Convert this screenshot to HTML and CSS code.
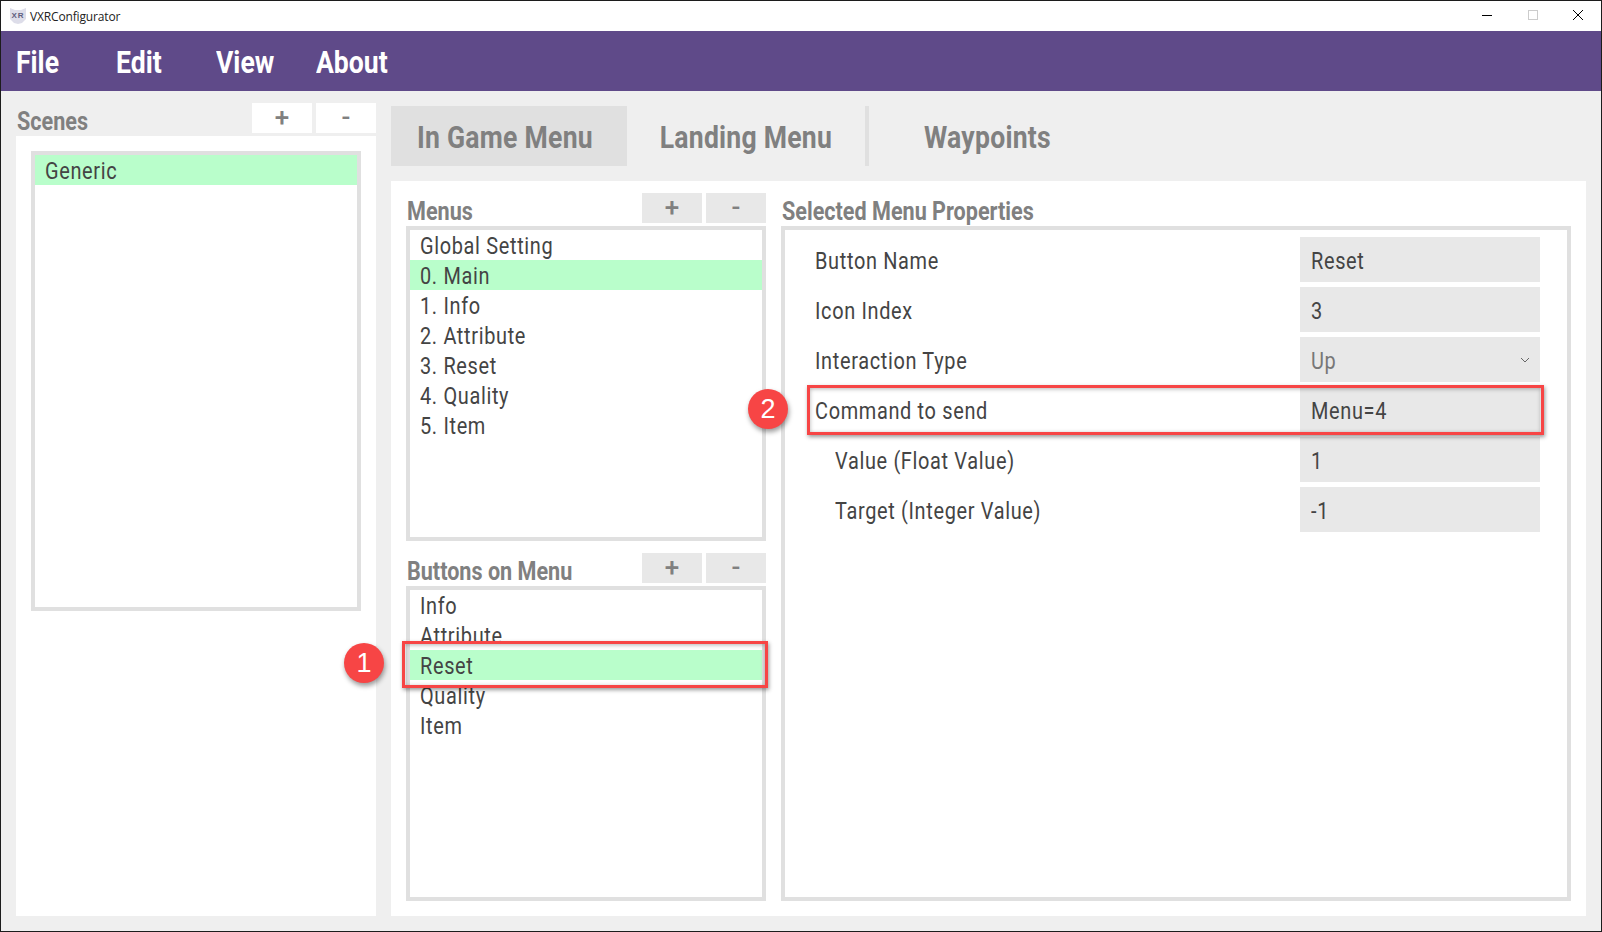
FILE: index.html
```html
<!DOCTYPE html>
<html lang="en">
<head>
    <meta charset="UTF-8">
    <meta name="viewport" content="width=device-width, initial-scale=1.0">
    <title>VXRConfigurator</title>
    <link rel="stylesheet" href="styles.css">
</head>
<body>
    <div class="window">
        <div class="titlebar">
            <svg class="app-icon" width="18" height="18" viewBox="0 0 18 18">
                <polygon points="1,1 6,3 12,3 17,1 17,12 13,16 9,17 5,16 1,12" fill="#dddde9"/>
                <text x="9" y="11" text-anchor="middle" class="app-icon-text">XR</text>
            </svg>
            <span class="app-name">VXRConfigurator</span>
            <div class="window-controls">
                <svg width="12" height="12" viewBox="0 0 12 12"><path d="M0 6.5H10" stroke="#000" stroke-width="1"/></svg>
                <svg width="12" height="12" viewBox="0 0 12 12"><rect x="1.5" y="1.5" width="9" height="9" fill="none" stroke="#ccc"/></svg>
                <svg width="12" height="12" viewBox="0 0 12 12"><path d="M1 1L11 11M11 1L1 11" stroke="#000" stroke-width="1"/></svg>
            </div>
        </div>

        <div class="menubar">
            <div class="menu-item"><span class="tx">File</span></div>
            <div class="menu-item"><span class="tx">Edit</span></div>
            <div class="menu-item"><span class="tx">View</span></div>
            <div class="menu-item"><span class="tx">About</span></div>
        </div>

        <div class="main">
            <div class="scenes">
                <div class="head">
                    <h2><span class="tx">Scenes</span></h2>
                    <div class="tool tool-light">+</div>
                    <div class="tool tool-light">-</div>
                </div>
                <div class="scenes-panel">
                    <div class="list list-scenes">
                        <div class="row selected"><span class="tx">Generic</span></div>
                    </div>
                </div>
            </div>

            <div class="content">
                <div class="tabs">
                    <div class="tab active"><span class="tx">In Game Menu</span></div>
                    <div class="tab divided"><span class="tx">Landing Menu</span></div>
                    <div class="tab"><span class="tx">Waypoints</span></div>
                </div>
                <div class="content-panel">
                    <div class="menus-col">
                        <div class="head">
                            <h2><span class="tx">Menus</span></h2>
                            <div class="tool">+</div>
                            <div class="tool">-</div>
                        </div>
                        <div class="list list-half">
                            <div class="row"><span class="tx">Global Setting</span></div>
                            <div class="row selected"><span class="tx">0. Main</span></div>
                            <div class="row"><span class="tx">1. Info</span></div>
                            <div class="row"><span class="tx">2. Attribute</span></div>
                            <div class="row"><span class="tx">3. Reset</span></div>
                            <div class="row"><span class="tx">4. Quality</span></div>
                            <div class="row"><span class="tx">5. Item</span></div>
                        </div>
                        <div class="head head-second">
                            <h2><span class="tx">Buttons on Menu</span></h2>
                            <div class="tool">+</div>
                            <div class="tool">-</div>
                        </div>
                        <div class="list list-half">
                            <div class="row"><span class="tx">Info</span></div>
                            <div class="row"><span class="tx">Attribute</span></div>
                            <div class="row selected"><span class="tx">Reset</span></div>
                            <div class="row"><span class="tx">Quality</span></div>
                            <div class="row"><span class="tx">Item</span></div>
                        </div>
                    </div>

                    <div class="props-col">
                        <div class="head">
                            <h2><span class="tx">Selected Menu Properties</span></h2>
                        </div>
                        <div class="props">
                            <div class="prop"><span class="tx">Button Name</span><div class="field"><span class="tx">Reset</span></div></div>
                            <div class="prop"><span class="tx">Icon Index</span><div class="field"><span class="tx">3</span></div></div>
                            <div class="prop">
                                <span class="tx">Interaction Type</span>
                                <div class="field field-select"><span class="tx">Up</span>
                                    <svg width="10" height="6" viewBox="0 0 10 6"><path d="M1 1L5 5L9 1" fill="none" stroke="#666" stroke-width="1"/></svg>
                                </div>
                            </div>
                            <div class="prop"><span class="tx">Command to send</span><div class="field"><span class="tx">Menu=4</span></div></div>
                            <div class="prop indented"><span class="tx">Value (Float Value)</span><div class="field"><span class="tx">1</span></div></div>
                            <div class="prop indented"><span class="tx">Target (Integer Value)</span><div class="field"><span class="tx">-1</span></div></div>
                        </div>
                    </div>
                </div>
            </div>
        </div>

        <!-- annotations drawn over the screenshot -->
        <div class="callout callout-one"></div>
        <div class="callout callout-two"></div>
        <div class="badge badge-one">1</div>
        <div class="badge badge-two">2</div>
    </div>
</body>
</html>
```

FILE: styles.css
```css
* {
    box-sizing: border-box;
}
body {
    margin: 0;
    font-family: Roboto, "Liberation Sans", sans-serif;
    color: #444;
}
.window {
    position: relative;
    width: 1602px;
    height: 932px;
    border: 1px solid #1c1c1c;
    background-color: #efefef;
    display: flex;
    flex-direction: column;
    overflow: hidden;
}
/* no condensed face is installed, so text gets squeezed sideways */
.tx {
    display: inline-block;
    white-space: nowrap;
    transform: scaleX(0.83);
    transform-origin: left center;
}
.titlebar {
    height: 30px;
    background-color: #fff;
    display: flex;
    align-items: center;
    padding-left: 8px;
}
.app-icon {
    margin-right: 3px;
}
.app-icon-text {
    font-family: "Liberation Sans", sans-serif;
    font-size: 8px;
    font-weight: 700;
    letter-spacing: 1px;
    fill: #5f5f80;
}
.app-name {
    font-family: "Open Sans", sans-serif;
    font-size: 12px;
    letter-spacing: -0.15px;
    color: #222;
}
.window-controls {
    margin-left: auto;
    display: flex;
    gap: 33px;
    padding-right: 17px;
    padding-bottom: 2px;
}
.menubar {
    height: 60px;
    background-color: #5f4a89;
    display: flex;
    align-items: center;
    padding-left: 15px;
}
.menu-item {
    width: 100px;
    font-size: 32px;
    font-weight: 700;
    color: #fff;
    padding-top: 2px;
}
.main {
    flex: 1;
    display: flex;
    gap: 15px;
    padding: 12px 15px 15px;
}
.scenes {
    width: 360px;
    display: flex;
    flex-direction: column;
}
.head {
    height: 30px;
    margin-bottom: 3px;
    display: flex;
    align-items: center;
    gap: 4px;
}
.head-second {
    margin-top: 12px;
}
h2 {
    flex: 1;
    margin: 0;
    padding-left: 1px;
    font-size: 26px;
    font-weight: 700;
    color: #808080;
    position: relative;
    top: 3px;
}
.tool {
    width: 60px;
    height: 30px;
    padding-bottom: 2px;
    background-color: #e8e8e8;
    color: #808080;
    font-size: 26px;
    font-weight: 500;
    display: flex;
    align-items: center;
    justify-content: center;
}
.tool-light {
    background-color: #fff;
}
.scenes-panel {
    flex: 1;
    background-color: #fff;
    padding: 15px;
}
.list {
    border: 4px solid #e0e0e0;
    background-color: #fff;
    overflow: hidden;
}
.list-scenes {
    height: 460px;
}
.list-half {
    height: 315px;
}
.row {
    height: 30px;
    line-height: 32px;
    padding-left: 10px;
    font-size: 24px;
    letter-spacing: 0.8px;
}
.selected {
    background-color: #b9fecb;
}
.content {
    flex: 1;
    display: flex;
    flex-direction: column;
    padding-top: 3px;
}
.tabs {
    height: 60px;
    display: flex;
    margin-bottom: 15px;
}
.tab {
    width: 236px;
    font-size: 32px;
    font-weight: 700;
    letter-spacing: 0.3px;
    color: #808080;
    display: flex;
    align-items: center;
    justify-content: center;
    padding-top: 2px;
}
.tab .tx {
    transform-origin: center;
}
.tab.active {
    background-color: #e0e0e0;
    padding-right: 8px;
}
.tab.divided {
    width: 242px;
    border-right: 4px solid #e0e0e0;
}
.content-panel {
    flex: 1;
    background-color: #fff;
    display: flex;
    gap: 15px;
    padding: 12px 15px 15px;
}
.menus-col {
    width: 360px;
}
.props-col {
    flex: 1;
    display: flex;
    flex-direction: column;
}
.props {
    flex: 1;
    border: 4px solid #e0e0e0;
    padding: 7px 27px 0 30px;
    display: flex;
    flex-direction: column;
    gap: 5px;
}
.prop {
    height: 45px;
    display: flex;
    align-items: center;
    justify-content: space-between;
    font-size: 24px;
    letter-spacing: 0.8px;
}
.prop .tx {
    position: relative;
    top: 1px;
}
.indented {
    padding-left: 20px;
}
.field {
    width: 240px;
    height: 45px;
    background-color: #e8e8e8;
    padding-left: 11px;
    display: flex;
    align-items: center;
    justify-content: space-between;
}
.field-select {
    color: #777;
    padding-right: 10px;
}
.callout {
    position: absolute;
    border: 3px solid #f74545;
    box-shadow: 1px 2px 4px rgba(0, 0, 0, 0.4), inset 0 1px 4px rgba(0, 0, 0, 0.3);
}
.callout-one {
    left: 401px;
    top: 640px;
    width: 366px;
    height: 47px;
}
.callout-two {
    left: 806px;
    top: 384px;
    width: 737px;
    height: 50px;
}
.badge {
    position: absolute;
    width: 40px;
    height: 40px;
    padding-top: 1px;
    border-radius: 50%;
    background-color: #f74545;
    box-shadow: 1px 3px 5px rgba(0, 0, 0, 0.4);
    color: #fff;
    font-family: "Liberation Sans", sans-serif;
    font-size: 27px;
    display: flex;
    align-items: center;
    justify-content: center;
}
.badge-one {
    left: 343px;
    top: 642px;
}
.badge-two {
    left: 747px;
    top: 388px;
}
```
